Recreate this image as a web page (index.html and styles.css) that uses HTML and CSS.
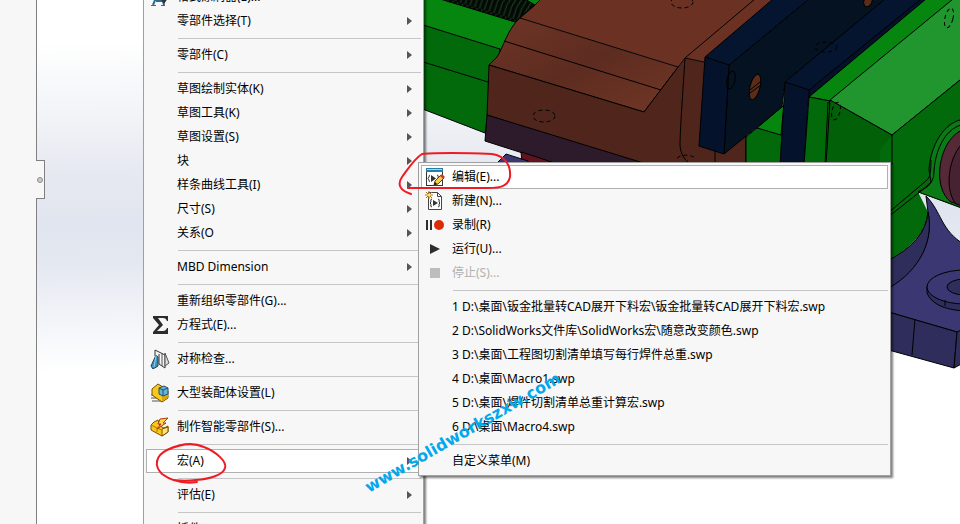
FILE: index.html
```html
<!DOCTYPE html>
<html lang="zh-CN">
<head>
    <meta charset="utf-8">
    <title>SolidWorks 宏</title>
    <meta name="viewport" content="width=device-width, initial-scale=1.0">
    <link rel="stylesheet" href="styles.css">
</head>
<body>
    <div class="app">
        <aside class="panel">
            <button type="button" class="panel-tab" aria-label="展开面板"><span class="dot"></span></button>
        </aside>
        <main class="viewport"></main>
    </div>

    <!-- 3D model -->
    <svg class="scene" aria-hidden="true">
        <defs>
            <linearGradient id="bevel" x1="0" y1="0" x2="1" y2="1">
                <stop offset="0" stop-color="#6e3526"/>
                <stop offset=".5" stop-color="#5d2c20"/>
                <stop offset="1" stop-color="#713726"/>
            </linearGradient>
            <pattern id="thread" width="5" height="22" patternUnits="userSpaceOnUse" patternTransform="rotate(17)">
                <rect width="5" height="22" fill="#020a03"/>
                <path d="M1 22Q0 10 4 0" stroke="#24402a" fill="none"/>
            </pattern>
        </defs>
        <g stroke="#000" stroke-linejoin="round">
            <!-- green bed -->
            <path fill="#06860f" d="M420-5H545L500 50 420 25Z"/>
            <path fill="#026a0a" d="M420 24 500 49 485 133 420 108Z"/>
            <path d="M420 61 488 82"/>
            <path fill="url(#thread)" d="M440-1H525L535 5 515 22Z"/>
            <!-- brown jaw -->
            <path stroke="none" fill="#6b3224" d="M541-1H775L704 62 685 58 678 67 520 18 534 6Z"/>
            <path fill="url(#bevel)" d="M520 18 678 67 644 112 489 65 497 57C503 48 508 28 520 18Z"/>
            <path fill="none" d="M541-1 534 6 520 18M504 41 661 90"/>
            <path fill="#50261c" d="M489 65 644 112 685 58 704 62 746 130V165H640L487 115Z"/>
            <path fill="#2d1b2b" d="M487 115 650 165H560L485 141Z"/>
            <path fill="none" d="M685 58C683 90 680 130 680 146Q681 157 689 163M685 58 755-1M715 150V165"/>
            <path fill="#61141f" d="M521 152 540 158 554 163H522Z"/>
            <path fill="#3a3773" d="M497 163 506 154 528 161V165H497Z"/>
            <g fill="none" stroke-dasharray="4 3">
                <ellipse cx="544" cy="116" rx="11" ry="6"/>
                <ellipse cx="682" cy="2" rx="11" ry="6"/>
                <path d="M677 158Q684 153 694 157"/>
            </g>
            <!-- blue jaw plates -->
            <path fill="#026a0a" d="M746 137 785 105V165H746Z"/>
            <path fill="#06860f" d="M757 128 784 105 781 135Z"/>
            <path fill="#041222" d="M729 65 809-1H886L785 82 782 107 724 154Z"/>
            <path fill="#05152f" d="M705 57 773-1H809L729 65Z"/>
            <path fill="#04122c" d="M705 57 729 65 724 154 699 146Z"/>
            <path fill="#041128" d="M809 90 920-1H927L809 97Z"/>
            <path fill="#05152f" d="M785 82 885-1H921L809 90Z"/>
            <path fill="#04122c" d="M785 82 809 90 804 165H780Z"/>
            <ellipse cx="731" cy="80" rx="4" ry="9" fill="none" transform="rotate(12 731 80)"/>
            <ellipse cx="755" cy="87" rx="5" ry="13" fill="#5b2c18" transform="rotate(14 755 87)"/>
            <path d="M750 90 760 82M750 93 761 85"/>
            <ellipse cx="868" cy="1" rx="4" ry="6" fill="#5b2c18" transform="rotate(20 868 1)"/>
            <ellipse cx="826" cy="47" rx="11" ry="5" fill="none" stroke-dasharray="4 3"/>
            <!-- fixed jaw -->
            <path fill="#06860f" d="M809 97 926-1H954L830 101Z"/>
            <path fill="#026a0a" d="M809 97 830 101 827 165H804Z"/>
            <path fill="#22962e" d="M830 100 953-1H965V76L892 135Z"/>
            <path fill="#026008" d="M830 100 892 135 891 165H826Z"/>
            <path stroke="none" fill="#026a0a" d="M892 135 965 76V210L918 192 928 212Q926 242 880 265V150Z"/>
            <path fill="none" d="M965 76 892 135V165M928 212Q926 242 885 263"/>
            <g fill="none" stroke-dasharray="4 3">
                <ellipse cx="949" cy="18" rx="4" ry="10" transform="rotate(14 949 18)"/>
                <ellipse cx="836" cy="111" rx="4" ry="9" transform="rotate(14 836 111)"/>
            </g>
            <path d="M828 102 825 165" fill="none"/>
            <!-- screw collar -->
            <path fill="#0a7a16" d="M965 119C943 121 930 148 929 170L931 182Q924 190 918 192L965 209Z"/>
            <path fill="none" d="M965 124C946 127 936 148 934 170Q935 184 922 190M888 213 927 180Q931 178 931 160M888 217 930 184"/>
            <path fill="#552938" d="M965 129C945 135 936 165 941 186Q944 197 951 202L965 206Z"/>
            <path fill="#472230" d="M965 141C948 155 944 190 956 204L965 207Z"/>
            <!-- base -->
            <path fill="#3a3773" d="M926 196C942 212 940 230 965 245V332L957 332 885 311V288C920 270 934 240 928 212Z"/>
            <path fill="#2f2d5c" d="M885 262Q926 242 928 212C935 245 915 275 885 290Z"/>
            <path fill="#2f2d5c" d="M885 311 957 332 954 368 885 349Z"/>
            <path fill="#2f2d5c" d="M957 332 965 328V362L954 368Z"/>
            <path d="M915 319 912 355"/>
            <path fill="#2f2d5c" d="M927 286V293C934 310 960 311 970 311V286Z"/>
            <ellipse cx="965" cy="287" rx="38" ry="17" fill="#3a3773"/>
            <ellipse cx="965" cy="287" rx="18" ry="8" fill="#2f2d5c"/>
            <path d="M945 300V306"/>
        </g>
    </svg>

    <nav class="menu main-menu" aria-label="工具">
        <button type="button" class="item">
            <svg class="icon" viewBox="0 0 20 20"><path d="M3 18 8 6H11L14 18M6 14H12" fill="none" stroke="#2b6c92" stroke-width="2"/><path d="M1 18.500H6M11 18.500H15" stroke="#2b6c92"/><path d="M10 11 16 7 18 11 14 17Z" fill="#333"/></svg>
            格式涂刷器(E)...
        </button>
        <button type="button" class="item more">零部件选择(T)</button>
        <hr>
        <button type="button" class="item more">零部件(C)</button>
        <hr>
        <button type="button" class="item more">草图绘制实体(K)</button>
        <button type="button" class="item more">草图工具(K)</button>
        <button type="button" class="item more">草图设置(S)</button>
        <button type="button" class="item more">块</button>
        <button type="button" class="item more">样条曲线工具(I)</button>
        <button type="button" class="item more">尺寸(S)</button>
        <button type="button" class="item more">关系(O</button>
        <hr>
        <button type="button" class="item more">MBD Dimension</button>
        <hr>
        <button type="button" class="item">重新组织零部件(G)...</button>
        <button type="button" class="item">
            <svg class="icon" viewBox="0 0 20 20"><path d="M3 1H18V6H17Q16 3 13 3H8L13 10 7 16H13Q16 16 17 13H18V19H3V17L9 10 3 3Z" fill="#2c2c2c"/></svg>
            方程式(E)...
        </button>
        <hr>
        <button type="button" class="item">
            <svg class="icon" viewBox="0 0 20 20"><path d="M1 17 6 6 8 8V17L3 20Z" fill="#3d93bd" stroke="#17465f"/><path d="M4 18 6 7" stroke="#9bd0e8"/><path d="M5 7V1L15 6V19L9 15V5" fill="#f5f5f5" stroke="#333"/><path d="M12 17V4M15 4 19 14 15 17Z" fill="#ddd" stroke="#555"/></svg>
            对称检查...
        </button>
        <hr>
        <button type="button" class="item">
            <svg class="icon" viewBox="0 0 20 20"><path d="M1 12H8M1 15H9M2 18H12" stroke="#555"/><path d="M2 6 8 1 13 4 18 8V15L12 19 2 12Z" fill="#f8c91c" stroke="#7a5200"/><path d="M12 12V18L18 14V9Z" fill="#dba70c"/><path d="M9 5 14 3 18 5V11L13 13 9 11Z" fill="#69b3d9" stroke="#1f5370"/><path d="M9 5 13 7 18 5M13 7V13" fill="none" stroke="#1f5370"/></svg>
            大型装配体设置(L)
        </button>
        <hr>
        <button type="button" class="item">
            <svg class="icon" viewBox="0 0 20 20"><path d="M1 8 4 5 8 3 10 9 14 11 18 9V15L12 19 1 13Z" fill="#f8c91c" stroke="#7a5200"/><path d="M12 12V19L18 15V10Z" fill="#ffe36a" stroke="#7a5200"/><path d="M1 8 7 11 12 13M7 11V15" fill="none" stroke="#a87900"/><path d="M18 1 10 2 8 7H11L7 12 16 6H13Z" fill="#ffd84a" stroke="#b0380f"/></svg>
            制作智能零部件(S)...
        </button>
        <hr>
        <button type="button" class="item more active" aria-haspopup="true" aria-expanded="true">宏(A)</button>
        <hr>
        <button type="button" class="item more">评估(E)</button>
        <hr>
        <button type="button" class="item more">插件(N)</button>
    </nav>

    <nav class="menu sub-menu" aria-label="宏">
        <button type="button" class="item active">
            <svg class="icon" viewBox="0 0 20 20"><rect x="1.500" y="1.500" width="16" height="17" fill="#fff" stroke="#333"/><path d="M1 1H18V5H1Z" fill="#267da8"/><path d="M2 2.500H17" stroke="#9bd7ee"/><path d="M5 8Q4 8 4 10L3 11.500 4 13Q4 15 5 15M12 8Q14 8 13 11" fill="none" stroke="#333"/><path d="M6 8 11 11.500 6 15Z" fill="#333"/><path d="M9 18 10 14 16 8 19 11 13 17Z" fill="#f7cf45" stroke="#5e4511"/><path d="M15 9 17 7 20 10 18 12Z" fill="#c43d35"/><path d="M9 18 10 15 12 17Z" fill="#111"/></svg>
            编辑(E)...
        </button>
        <button type="button" class="item">
            <svg class="icon" viewBox="0 0 20 20"><path d="M3.500 1.500H12.500L16.500 5.500V18.500H3.500Z" fill="#fff" stroke="#444"/><path d="M12.500 1.500V5.500H16.500" fill="none" stroke="#444"/><path d="M7 8Q5 8 6 11L5 12 6 13Q5 16 7 16M13 8Q15 8 14 11L15 12 14 13Q15 16 13 16" fill="none" stroke="#333"/><path d="M8 9 13 12 8 15Z" fill="#333"/><path d="M4 0V8M0 4H8M1 1 7 7M7 1 1 7" stroke="#b96813"/><circle cx="4" cy="4" r="1.500" fill="#ffe45a"/></svg>
            新建(N)...
        </button>
        <button type="button" class="item">
            <svg class="icon" viewBox="0 0 20 20"><path d="M1 5H3V15H1ZM5 5H7V15H5Z" fill="#2e2e2e"/><circle cx="14" cy="10" r="5" fill="#dc2a05"/></svg>
            录制(R)
        </button>
        <button type="button" class="item">
            <svg class="icon" viewBox="0 0 20 20"><path d="M5 5 15 10 5 15Z" fill="#2e2e2e"/></svg>
            运行(U)...
        </button>
        <button type="button" class="item" disabled>
            <svg class="icon" viewBox="0 0 20 20"><path d="M5 5H15V15H5Z" fill="#bdbdbd"/></svg>
            停止(S)...
        </button>
        <hr>
        <button type="button" class="item">1 D:\桌面\钣金批量转CAD展开下料宏\钣金批量转CAD展开下料宏.swp</button>
        <button type="button" class="item">2 D:\SolidWorks文件库\SolidWorks宏\随意改变颜色.swp</button>
        <button type="button" class="item">3 D:\桌面\工程图切割清单填写每行焊件总重.swp</button>
        <button type="button" class="item">4 D:\桌面\Macro1.swp</button>
        <button type="button" class="item">5 D:\桌面\焊件切割清单总重计算宏.swp</button>
        <button type="button" class="item">6 D:\桌面\Macro4.swp</button>
        <hr>
        <button type="button" class="item">自定义菜单(M)</button>
    </nav>

    <!-- red pen marks and watermark -->
    <svg class="marks">
        <path d="M411 194C402 191 396 186 402 177C408 169 414 159 422 154C445 152 470 153 492 154C505 156 511 165 510 177C508 186 501 188 488 188H408"/>
        <path d="M197 482C184 484 173 482 162 474C154 466 155 456 167 450C180 444 193 442 204 447C217 452 227 462 225 468C223 475 210 479 196 480C188 481 181 481 174 480"/>
        <text class="watermark" transform="translate(369 493) rotate(-30)">www.solidworkszxw.com</text>
    </svg>
</body>
</html>
```

FILE: styles.css
```css
* {
    box-sizing: border-box;
}
body {
    margin: 0;
    height: 100vh;
    position: relative;
    overflow: hidden;
    font-family: "Noto Sans", "Noto Sans CJK SC", sans-serif;
    font-size: 12px;
    color: #000;
}
.app {
    display: flex;
    height: 100%;
}
.panel {
    width: 37px;
    position: relative;
    background: #f7f7f7;
    border-right: 1px solid #808080;
}
.panel-tab {
    position: absolute;
    left: 36px;
    top: 160px;
    width: 9px;
    height: 39px;
    padding: 0;
    display: flex;
    align-items: center;
    justify-content: center;
    background: #f7f7f7;
    border: 1px solid #808080;
    border-left: 0;
}
.dot {
    width: 6px;
    height: 6px;
    border: 1px solid #8c8c8c;
    border-radius: 50%;
    background: #ccc;
}
.viewport {
    flex: 1;
    background: linear-gradient(179deg, #fff 8%, #f1f3f7 22%, #e6e9f0 32%, #e1e5ef 42%, #e4e8f0 49%, #f1f3f8 58%, #fff 69%);
}
.scene, .marks {
    position: absolute;
    left: 0;
    top: 0;
    width: 100%;
    height: 100%;
}

/* menus */
.menu {
    position: absolute;
    display: flex;
    flex-direction: column;
    padding: 2px;
    background: #f7f7f7;
    border: 1px solid #a0a0a0;
    box-shadow: 2px 2px 2px rgba(0, 0, 0, 0.5);
}
.main-menu {
    left: 143px;
    top: -18px;
    width: 281px;
}
.sub-menu {
    left: 418px;
    top: 162px;
    width: 473px;
}
.item {
    position: relative;
    height: 24px;
    padding: 0 0 0 30px;
    border: 1px solid transparent;
    background: none;
    font: inherit;
    line-height: 22px;
    text-align: left;
    white-space: nowrap;
    color: #000;
}
.item:disabled {
    color: #b0b0b0;
}
.item.active {
    background: #fff;
    border-color: #b0b0b0;
}
.item.more::after {
    content: "";
    position: absolute;
    right: 8px;
    top: 7px;
    border: 4px solid transparent;
    border-left: 5px solid #555;
    border-right: 0;
}
.icon {
    position: absolute;
    left: 3px;
    top: 1px;
    width: 20px;
    height: 20px;
}
.menu hr {
    width: auto;
    height: 1px;
    margin: 5px 0 4px 32px;
    border: 0;
    background: #c6c6c6;
}

.marks {
    pointer-events: none;
}
.marks path {
    fill: none;
    stroke: #ed1c24;
    stroke-width: 2;
    stroke-linecap: round;
}
.watermark {
    font-family: "DejaVu Sans", sans-serif;
    font-size: 16px;
    font-weight: bold;
    fill: #00a8ec;
}
```
